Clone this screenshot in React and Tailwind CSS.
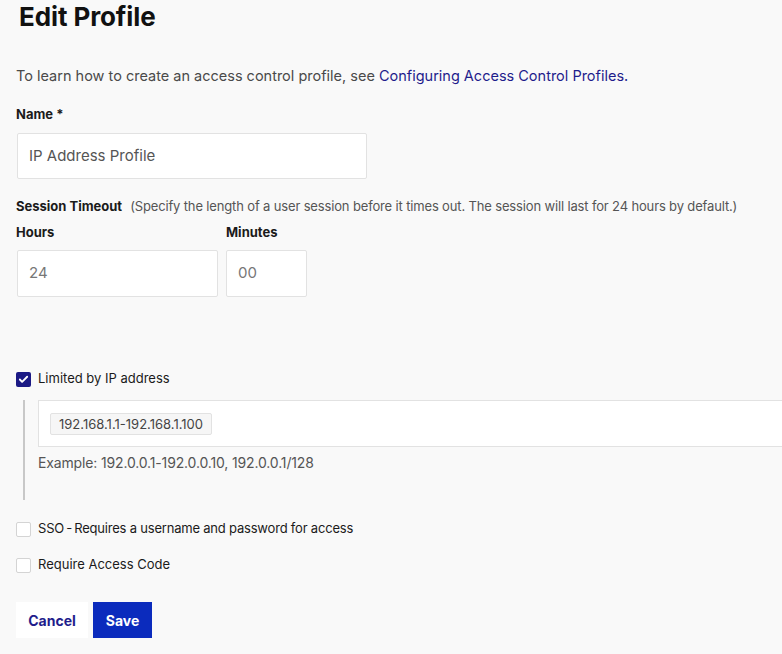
import React from "react";
import { Check } from "lucide-react";

const font = { fontFamily: "Inter, 'Liberation Sans', sans-serif" };

function Box({ checked }) {
  return checked ? (
    <span className="flex h-[15px] w-[15px] items-center justify-center rounded-[2px] bg-[#1c1a85]">
      <Check className="h-[11px] w-[11px] text-white" strokeWidth={4} />
    </span>
  ) : (
    <span className="h-[15px] w-[15px] rounded-[2px] border border-[#d4d4d4] bg-white" />
  );
}

export default function App() {
  return (
    <div className="min-h-screen bg-[#f9f9f9] px-4 text-[#1b1b1b]" style={font}>
      <h1 className="ml-[3px] text-[26px] font-bold leading-[34px] tracking-[-0.1px] text-[#111]">Edit Profile</h1>

      <p className="mt-[32px] text-[14.5px] leading-[20px] text-[#4a4a4a]">
        To learn how to create an access control profile, see{" "}
        <a href="#" className="text-[#1f1d8c]">Configuring Access Control Profiles.</a>
      </p>

      <div className="mt-[19px] text-[13px] font-bold leading-[18px]">Name *</div>
      <div className="mt-[10px] ml-px flex h-[46px] w-[350px] items-center rounded-[2px] border border-[#e2e2e2] bg-white px-[11px] text-[15px] text-[#555]">
        IP Address Profile
      </div>

      <div className="mt-[18px] flex items-baseline gap-[8px] text-[13px] leading-[18px]">
        <span className="font-bold">Session Timeout</span>
        <span className="tracking-[-0.15px] text-[#555]">(Specify the length of a user session before it times out. The session will last for 24 hours by default.)</span>
      </div>

      <div className="mt-[8px] ml-px flex gap-[8px]">
        <div>
          <div className="-ml-px text-[13px] font-bold leading-[18px]">Hours</div>
          <div className="mt-[9px] flex h-[47px] w-[201px] items-center rounded-[2px] border border-[#e2e2e2] bg-white px-[11px] text-[15px] text-[#777]">24</div>
        </div>
        <div>
          <div className="text-[13px] font-bold leading-[18px]">Minutes</div>
          <div className="mt-[9px] flex h-[47px] w-[81px] items-center rounded-[2px] border border-[#e2e2e2] bg-white px-[11px] text-[15px] text-[#777]">00</div>
        </div>
      </div>

      <label className="mt-[72px] flex h-[20px] items-center gap-[7px] text-[13px]">
        <Box checked />
        <span>Limited by IP address</span>
      </label>
      <div className="ml-[7px] border-l-2 border-[#c8c8c8] pb-[27px] pl-[13px]">
        <div className="-mr-4 mt-[11px] flex h-[47px] items-center border-y border-l border-[#e2e2e2] bg-white px-[11px]">
          <span className="rounded-[2px] border border-[#e2e2e2] bg-[#f6f6f6] px-[8px] py-[2px] text-[13px] leading-[16px] text-[#444]">
            192.168.1.1-192.168.1.100
          </span>
        </div>
        <div className="mt-[6px] text-[14px] leading-[20px] tracking-[-0.15px] text-[#555]">Example: 192.0.0.1-192.0.0.10, 192.0.0.1/128</div>
      </div>

      <label className="mt-[19px] flex h-[20px] items-center gap-[7px] text-[13px]">
        <Box />
        <span className="tracking-[-0.2px]">SSO{"\u2009"}-{"\u2009"}Requires a username and password for access</span>
      </label>
      <label className="mt-[16px] flex h-[20px] items-center gap-[7px] text-[13px]">
        <Box />
        <span>Require Access Code</span>
      </label>

      <div className="mt-[27px] flex gap-[5px]">
        <button className="h-[36px] w-[72px] bg-white text-[14px] font-bold text-[#1f1d8c]">Cancel</button>
        <button className="h-[36px] w-[59px] bg-[#0b2bbd] text-[14px] font-bold text-white">Save</button>
      </div>
    </div>
  );
}
